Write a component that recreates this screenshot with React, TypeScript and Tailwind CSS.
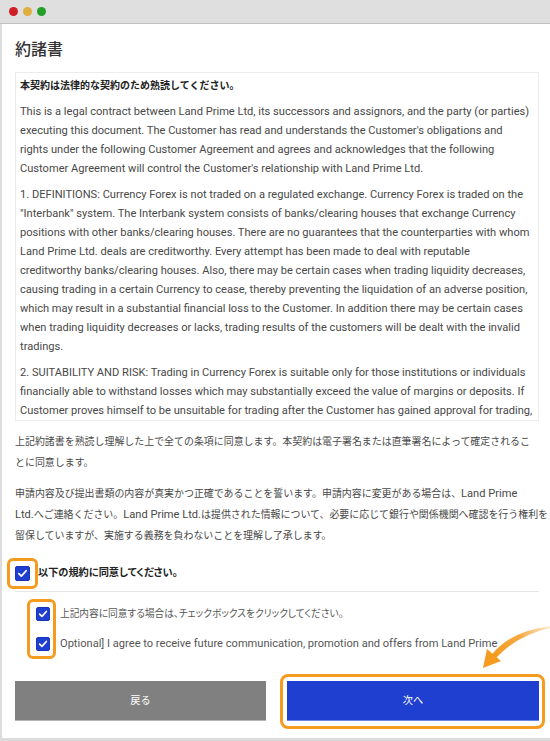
import React from "react";

function Check({ size }: { size: number }) {
  return (
    <div
      className="flex items-center justify-center rounded-[2px] bg-[#1f3fd0] border border-[#1a36b8]"
      style={{ width: size, height: size }}
    >
      <svg viewBox="0 0 16 16" width={size - 2} height={size - 2}>
        <polyline
          points="3.5,8.2 6.6,11.2 12.5,4.6"
          fill="none"
          stroke="white"
          strokeWidth="2.2"
          strokeLinecap="round"
          strokeLinejoin="round"
        />
      </svg>
    </div>
  );
}

function Lines({ lines }: { lines: string[] }) {
  return (
    <>
      {lines.map((l, i) => (
        <div key={i} className="whitespace-nowrap">
          {l}
        </div>
      ))}
    </>
  );
}

const p1 = [
  "This is a legal contract between Land Prime Ltd, its successors and assignors, and the party (or parties)",
  "executing this document. The Customer has read and understands the Customer's obligations and",
  "rights under the following Customer Agreement and agrees and acknowledges that the following",
  "Customer Agreement will control the Customer's relationship with Land Prime Ltd.",
];
const p2 = [
  "1. DEFINITIONS: Currency Forex is not traded on a regulated exchange. Currency Forex is traded on the",
  "\"Interbank\" system. The Interbank system consists of banks/clearing houses that exchange Currency",
  "positions with other banks/clearing houses. There are no guarantees that the counterparties with whom",
  "Land Prime Ltd. deals are creditworthy. Every attempt has been made to deal with reputable",
  "creditworthy banks/clearing houses. Also, there may be certain cases when trading liquidity decreases,",
  "causing trading in a certain Currency to cease, thereby preventing the liquidation of an adverse position,",
  "which may result in a substantial financial loss to the Customer. In addition there may be certain cases",
  "when trading liquidity decreases or lacks, trading results of the customers will be dealt with the invalid",
  "tradings.",
];
const p3 = [
  "2. SUITABILITY AND RISK: Trading in Currency Forex is suitable only for those institutions or individuals",
  "financially able to withstand losses which may substantially exceed the value of margins or deposits. If",
  "Customer proves himself to be unsuitable for trading after the Customer has gained approval for trading,",
];

export default function App() {
  return (
    <div className="relative w-[550px] h-[741px] bg-white overflow-hidden text-[#484848] font-['Roboto','Noto_Sans_CJK_JP',sans-serif]">
      {/* title bar */}
      <div className="h-[24px] bg-[#dfdfdf] border-b border-[#c2c2c2] flex items-center gap-[5px] pl-[9px]">
        <div className="w-[9px] h-[9px] rounded-full bg-[#cf1f27]" />
        <div className="w-[9px] h-[9px] rounded-full bg-[#e0ae3c]" />
        <div className="w-[9px] h-[9px] rounded-full bg-[#24a02a]" />
      </div>

      <div className="h-[717px] border-l-2 border-b-[3px] border-[#dcdcdc] pl-[13px] pr-[11px] flex flex-col">
        <h1 className="pt-[14px] text-[16px] leading-[24px] font-medium text-[#333]">約諸書</h1>

        <div className="mt-[10px] h-[349px] border border-[#ededed] px-[4px] pt-[3px] overflow-hidden text-[11.1px] leading-[19px]">
          <p className="mb-[7px] text-[10px] font-bold text-[#222]">本契約は法律的な契約のため熟読してください。</p>
          <div className="mb-[7px]">
            <Lines lines={p1} />
          </div>
          <div className="mb-[7px]">
            <Lines lines={p2} />
          </div>
          <div>
            <Lines lines={p3} />
          </div>
        </div>

        <div className="mt-[10px] text-[9.95px] leading-[21px]">
          <div className="mb-[10px]">
            <div className="whitespace-nowrap">
              上記約諸書を熟読し理解した上で全ての条項に同意します。本契約は電子署名または直筆署名によって確定されるこ
            </div>
            <div className="whitespace-nowrap">とに同意します。</div>
          </div>
          <div>
            <div className="whitespace-nowrap">
              申請内容及び提出書類の内容が真実かつ正確であることを誓います。申請内容に変更がある場合は、
              <span className="text-[11.1px]">Land Prime</span>
            </div>
            <div className="whitespace-nowrap">
              <span className="text-[11.1px]">Ltd.</span>へご連絡ください。
              <span className="text-[11.1px]">Land Prime Ltd.</span>
              は提供された情報について、必要に応じて銀行や関係機関へ確認を行う権利を
            </div>
            <div className="whitespace-nowrap">留保していますが、実施する義務を負わないことを理解し了承します。</div>
          </div>
        </div>

        {/* main checkbox */}
        <div className="mt-[16px] h-[22px] flex items-center">
          <div className="relative">
            <div className="absolute -left-[8px] -top-[8px] w-[31px] h-[31px] rounded-[6px] border-[3.5px] border-[#f49b20]" />
            <Check size={15} />
          </div>
          <span className="ml-[8px] text-[10.2px] font-bold text-[#222] [font-feature-settings:'palt']">
            以下の規約に同意してください。
          </span>
        </div>

        <div className="mt-[7px] border-t border-[#e6e6e6]" />

        <div className="relative mt-[15px] pl-[21px] flex flex-col gap-[16px]">
          <div className="absolute left-[12px] -top-[8px] w-[29px] h-[60px] rounded-[6px] border-[3.5px] border-[#f49b20]" />
          <div className="h-[14px] flex items-center">
            <Check size={14} />
            <span className="ml-[10px] text-[9.7px] text-[#555] whitespace-nowrap [font-feature-settings:'palt']">
              上記内容に同意する場合は、チェックボックスをクリックしてください。
            </span>
          </div>
          <div className="h-[14px] flex items-center">
            <Check size={14} />
            <span className="ml-[10px] text-[11.1px] text-[#555] whitespace-nowrap">
              Optional] I agree to receive future communication, promotion and offers from Land Prime
            </span>
          </div>
        </div>

        <div className="mt-[30px] flex gap-[21px]">
          <button className="w-[251px] h-[40px] bg-[#808080] border-b border-[#b5b5b5] text-white text-[10.2px]">
            戻る
          </button>
          <div className="relative">
            <div className="absolute -left-[7px] -top-[7px] -right-[6px] -bottom-[8px] rounded-[8px] border-[3.5px] border-[#f49b20]" />
            <button className="relative w-[252px] h-[40px] bg-[#1f3fd0] border-b border-[#6f85e6] text-white text-[10.2px]">
              次へ
            </button>
          </div>
        </div>
      </div>

      {/* arrow */}
      <svg className="absolute left-0 top-0 pointer-events-none" width="550" height="741" viewBox="0 0 550 741">
        <defs>
          <linearGradient id="ag" x1="551" y1="627" x2="494" y2="656" gradientUnits="userSpaceOnUse">
            <stop offset="0" stopColor="#f49b20" stopOpacity="0.2" />
            <stop offset="0.5" stopColor="#f49b20" stopOpacity="0.85" />
            <stop offset="1" stopColor="#f49b20" stopOpacity="1" />
          </linearGradient>
        </defs>
        <path
          d="M551 626.3 Q513 629.5 492 654.2 L496.2 657.8 Q518 634.5 551 627.7 Z"
          fill="url(#ag)"
        />
        <polygon points="483,668 487,649 501,661" fill="#f49b20" />
      </svg>
    </div>
  );
}
